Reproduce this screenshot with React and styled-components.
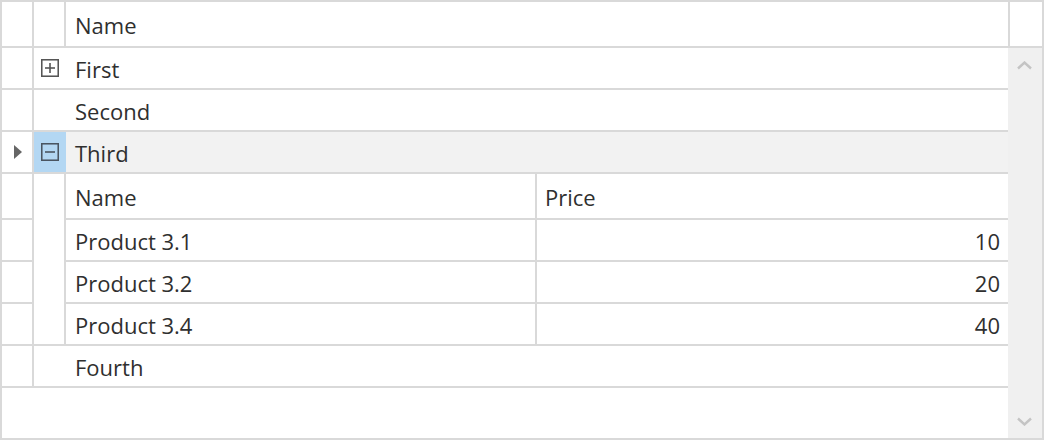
import React from "react";
import styled, { createGlobalStyle } from "styled-components";

const LINE = "#d9d9d9";

const Global = createGlobalStyle`
  html, body { margin: 0; padding: 0; background: #ffffff; }
  body { font-family: "Open Sans", "Noto Sans", sans-serif; }
  * { box-sizing: border-box; }
`;

const Grid = styled.div`
  width: 1044px;
  height: 440px;
  border: 2px solid ${LINE};
  display: flex;
  flex-direction: column;
  background: #fff;
  color: #2f2f2f;
  font-size: 22px;
  overflow: hidden;
`;

const HeaderRow = styled.div`
  display: flex;
  height: 46px;
  border-bottom: 2px solid ${LINE};
  flex: none;
`;

const IndicatorCell = styled.div`
  width: 32px;
  flex: none;
  border-right: 2px solid ${LINE};
  display: flex;
  align-items: center;
  justify-content: center;
  padding-left: 2px;
`;

const HeaderExpandCell = styled.div`
  width: 32px;
  flex: none;
  border-right: 2px solid ${LINE};
`;

const HeaderText = styled.div`
  flex: 1;
  display: flex;
  align-items: center;
  padding-left: 9px;
  padding-top: 2px;
  border-right: 2px solid ${LINE};
`;

const HeaderFiller = styled.div`
  width: 32px;
  flex: none;
`;

const Body = styled.div`
  flex: 1;
  display: flex;
  min-height: 0;
`;

const Rows = styled.div`
  flex: 1;
  display: flex;
  flex-direction: column;
`;

const Row = styled.div`
  display: flex;
  height: 42px;
  border-bottom: 2px solid ${LINE};
  flex: none;
`;

const ExpandCell = styled.div`
  width: 32px;
  flex: none;
  display: flex;
  align-items: center;
  justify-content: center;
  background: ${(p) => (p.$selected ? "#b3d7f3" : "transparent")};
`;

const NameCell = styled.div`
  flex: 1;
  display: flex;
  align-items: center;
  padding-left: 9px;
  padding-top: 1px;
  background: ${(p) => (p.$selected ? "#f2f2f2" : "transparent")};
`;

const Detail = styled.div`
  display: flex;
  flex: none;
  border-bottom: 2px solid ${LINE};
`;

const DetailIndicators = styled.div`
  width: 32px;
  flex: none;
  border-right: 2px solid ${LINE};
  display: flex;
  flex-direction: column;
`;

const IndicatorStub = styled.div`
  height: ${(p) => p.$h}px;
  border-bottom: ${(p) => (p.$noLine ? "none" : `2px solid ${LINE}`)};
`;

const DetailSpacer = styled.div`
  width: 30px;
  flex: none;
`;

const DetailTable = styled.div`
  flex: 1;
  border-left: 2px solid ${LINE};
  display: flex;
  flex-direction: column;
`;

const DetailRow = styled.div`
  display: flex;
  height: ${(p) => p.$h}px;
  border-bottom: ${(p) => (p.$noLine ? "none" : `2px solid ${LINE}`)};
`;

const DetailCell = styled.div`
  width: 50%;
  flex: none;
  display: flex;
  align-items: center;
  padding: 1px 8px 0 ${(p) => (p.$first ? 9 : 8)}px;
  justify-content: ${(p) => (p.$right ? "flex-end" : "flex-start")};
  border-right: ${(p) => (p.$first ? `2px solid ${LINE}` : "none")};
`;

const Scrollbar = styled.div`
  width: 34px;
  flex: none;
  background: #f0f0f0;
  display: flex;
  flex-direction: column;
  justify-content: space-between;
`;

const ScrollButton = styled.div`
  height: 34px;
  display: flex;
  align-items: center;
  justify-content: center;
  padding-right: 1px;
`;

const PlusMinus = ({ minus, color }) => (
  <svg width="18" height="18" viewBox="0 0 18 18">
    <rect x="0.75" y="0.75" width="16.5" height="16.5" fill="none" stroke={color} strokeWidth="1.6" />
    <line x1="4" y1="9" x2="14" y2="9" stroke={color} strokeWidth="1.6" />
    {!minus && <line x1="9" y1="4" x2="9" y2="14" stroke={color} strokeWidth="1.6" />}
  </svg>
);

const RowArrow = () => (
  <svg width="8" height="14" viewBox="0 0 8 14">
    <path d="M0 0 L8 7 L0 14 Z" fill="#666666" />
  </svg>
);

const Chevron = ({ down }) => (
  <svg width="15" height="9" viewBox="0 0 15 9">
    <path
      d={down ? "M1 1.5 L7.5 7.5 L14 1.5" : "M1 7.5 L7.5 1.5 L14 7.5"}
      fill="none"
      stroke="#c4c4c4"
      strokeWidth="2.4"
    />
  </svg>
);

const products = [
  { name: "Product 3.1", price: 10 },
  { name: "Product 3.2", price: 20 },
  { name: "Product 3.4", price: 40 },
];

export default function App() {
  return (
    <>
      <Global />
      <Grid>
        <HeaderRow>
          <IndicatorCell />
          <HeaderExpandCell />
          <HeaderText>Name</HeaderText>
          <HeaderFiller />
        </HeaderRow>
        <Body>
          <Rows>
            <Row>
              <IndicatorCell />
              <ExpandCell>
                <PlusMinus color="#555555" />
              </ExpandCell>
              <NameCell>First</NameCell>
            </Row>
            <Row>
              <IndicatorCell />
              <ExpandCell />
              <NameCell>Second</NameCell>
            </Row>
            <Row>
              <IndicatorCell>
                <RowArrow />
              </IndicatorCell>
              <ExpandCell $selected>
                <PlusMinus minus color="#4a5561" />
              </ExpandCell>
              <NameCell $selected>Third</NameCell>
            </Row>
            <Detail>
              <DetailIndicators>
                <IndicatorStub $h={46} />
                <IndicatorStub $h={42} />
                <IndicatorStub $h={42} />
                <IndicatorStub $h={40} $noLine />
              </DetailIndicators>
              <DetailSpacer />
              <DetailTable>
                <DetailRow $h={46}>
                  <DetailCell $first>Name</DetailCell>
                  <DetailCell>Price</DetailCell>
                </DetailRow>
                {products.map((p, i) => {
                  const last = i === products.length - 1;
                  return (
                    <DetailRow key={p.name} $h={last ? 40 : 42} $noLine={last}>
                      <DetailCell $first>{p.name}</DetailCell>
                      <DetailCell $right>{p.price}</DetailCell>
                    </DetailRow>
                  );
                })}
              </DetailTable>
            </Detail>
            <Row>
              <IndicatorCell />
              <ExpandCell />
              <NameCell>Fourth</NameCell>
            </Row>
          </Rows>
          <Scrollbar>
            <ScrollButton>
              <Chevron />
            </ScrollButton>
            <ScrollButton>
              <Chevron down />
            </ScrollButton>
          </Scrollbar>
        </Body>
      </Grid>
    </>
  );
}
